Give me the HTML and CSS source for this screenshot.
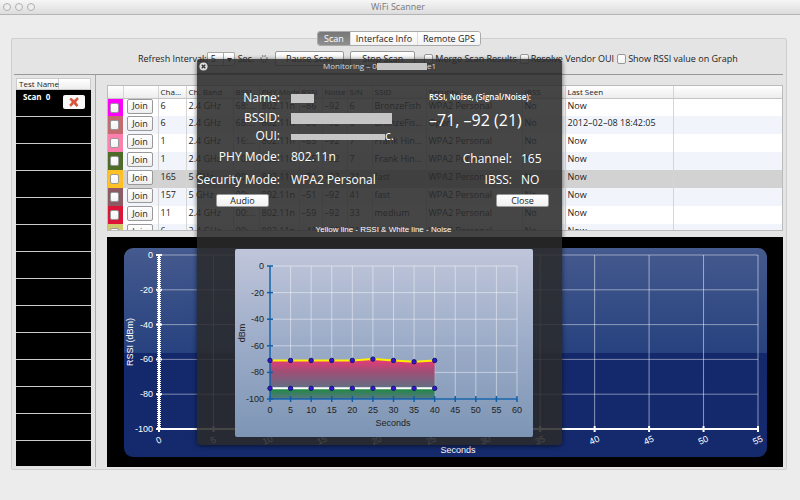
FILE: index.html
```html
<!DOCTYPE html>
<html lang="en">
  <head>
    <meta charset="UTF-8" />
    <meta name="viewport" content="width=device-width, initial-scale=1.0" />
    <title>WiFi Scanner</title>
    <link rel="stylesheet" href="styles.css">
  </head>
  <body>
    <header class="titlebar">
      <div class="lights"><i></i><i></i><i></i></div>
      <h1>WiFi Scanner</h1>
    </header>

    <main class="window">
      <nav class="tabs">
        <button class="active" type="button">Scan</button>
        <button type="button">Interface Info</button>
        <button type="button">Remote GPS</button>
      </nav>

      <section class="group">
        <div class="toolbar">
          <label class="interval">Refresh Interval:
            <select><option>5</option></select>
          </label>
          <span>Sec.</span>
          <svg class="spinner" viewBox="0 0 10 10"><circle cx="5" cy="5" r="3" fill="none" stroke="#777" stroke-width="2" stroke-dasharray="1 1.4" /></svg>
          <button class="btn wide" type="button">Pause Scan</button>
          <button class="btn wide last" type="button">Stop Scan</button>
          <label class="check"><input type="checkbox" />Merge Scan Results</label>
          <label class="check"><input type="checkbox" />Resolve Vendor OUI</label>
          <label class="check"><input type="checkbox" />Show RSSI value on Graph</label>
        </div>

        <div class="content">
          <aside class="tests">
            <div class="testsHead"><span>Test Name</span></div>
            <div class="testRow">
              <p>Scan&nbsp; 0</p>
              <button class="delete" type="button" aria-label="Delete">
                <svg viewBox="0 0 10 10"><path d="M2 1 L5 3.4 L8.4 .6 L9.4 2 L6.8 5 L9 8.4 L7.4 9.4 L4.8 6.6 L2 9.4 L.6 8 L3.2 5 L.8 2.2 Z" fill="#e2543a" stroke="#b8351f" stroke-width=".5" /></svg>
              </button>
            </div>
            <div class="testRow"></div>
            <div class="testRow"></div>
            <div class="testRow"></div>
            <div class="testRow"></div>
            <div class="testRow"></div>
            <div class="testRow"></div>
            <div class="testRow"></div>
            <div class="testRow"></div>
            <div class="testRow"></div>
            <div class="testRow"></div>
            <div class="testRow"></div>
            <div class="testRow"></div>
            <div class="testRow"></div>
          </aside>

          <div class="results">
            <div class="tableBox">
              <table>
                <colgroup>
                  <col class="cColor" /><col class="cJoin" /><col class="cChan" /><col class="cBand" /><col class="cBssid" /><col class="cPhy" /><col class="cNum" /><col class="cNoise" /><col class="cNoise" /><col class="cSsid" /><col class="cSec" /><col class="cIbss" /><col class="cSeen" /><col />
                </colgroup>
                <thead>
                  <tr><th></th><th></th><th>Cha...</th><th>Ch. Band</th><th>BSSI...</th><th>PHY Mode</th><th>RSSI</th><th>Noise</th><th>S/N</th><th>SSID</th><th>Security</th><th>IBSS</th><th>Last Seen</th><th></th></tr>
                </thead>
                <tbody id="networks"></tbody>
              </table>
            </div>

            <div class="graph">
              <svg id="mainChart" viewBox="0 0 643 209">
                <defs>
                  <linearGradient id="sky" x1="0" y1="0" x2="0" y2="1">
                    <stop offset="0" stop-color="#455a8e" />
                    <stop offset=".5" stop-color="#27427f" />
                    <stop offset=".5" stop-color="#14296c" />
                    <stop offset="1" stop-color="#142a6d" />
                  </linearGradient>
                </defs>
                <rect width="643" height="209" rx="9" fill="url(#sky)" />
              </svg>
            </div>
          </div>
        </div>
      </section>
    </main>

    <section class="monitor">
      <div class="monitorHead">
        <button class="closeX" type="button" aria-label="Close window">
          <svg viewBox="0 0 10 10"><circle cx="5" cy="5" r="4.5" fill="#ddd" /><path d="M3 3 L7 7 M7 3 L3 7" stroke="#333" stroke-width="1.4" /></svg>
        </button>
        <h2>Monitoring – 0<span class="redact mac"></span>e1</h2>
      </div>
      <div class="details">
        <dl>
          <dt>Name:</dt><dd><span class="redact name"></span></dd>
          <dt>BSSID:</dt><dd><span class="redact bssid"></span></dd>
          <dt>OUI:</dt><dd class="oui"><span class="redact vendor"></span>c.</dd>
          <dt>PHY Mode:</dt><dd>802.11n</dd>
          <dt>Security Mode:</dt><dd>WPA2 Personal</dd>
        </dl>
        <div class="signal">
          <p class="signalLabel">RSSI, Noise, (Signal/Noise):</p>
          <p class="signalValue">–71, –92 (21)</p>
          <dl>
            <dt>Channel:</dt><dd>165</dd>
            <dt>IBSS:</dt><dd>NO</dd>
          </dl>
        </div>
      </div>
      <div class="actions">
        <button class="btn" type="button">Audio</button>
        <button class="btn" type="button">Close</button>
      </div>
      <p class="legend">Yellow line - RSSI &amp; White line - Noise</p>
      <div class="monitorGraph">
        <svg id="monitorChart" viewBox="0 0 298 188">
          <defs>
            <linearGradient id="pink" x1="0" y1="0" x2="0" y2="1">
              <stop offset="0" stop-color="#ec3a78" />
              <stop offset=".4" stop-color="#a34d75" />
              <stop offset="1" stop-color="#5f7084" />
            </linearGradient>
            <linearGradient id="green" x1="0" y1="0" x2="0" y2="1">
              <stop offset="0" stop-color="#1b8a3f" />
              <stop offset="1" stop-color="#5b7584" />
            </linearGradient>
          </defs>
        </svg>
      </div>
    </section>
    <script src="script.js"></script>
  </body>
</html>
```

FILE: styles.css
```css
* {
  box-sizing: border-box;
}
body {
  margin: 0;
  min-height: 100vh;
  position: relative;
  background: #ececec;
  color: #222;
  font: 9px/12px "Open Sans", "Noto Sans", sans-serif;
}
h1,
h2,
p,
dl,
dd {
  margin: 0;
}
button,
select,
input {
  font: inherit;
  color: inherit;
  margin: 0;
  padding: 0;
}
svg {
  display: block;
}

.titlebar {
  display: flex;
  align-items: center;
  height: 15px;
  background: linear-gradient(#f6f6f6, #dcdcdc);
  border-bottom: 1px solid #b5b5b5;
}
.titlebar h1 {
  flex: 1;
  padding-right: 40px;
  text-align: center;
  font-size: 9px;
  font-weight: normal;
  color: #777;
}
.lights {
  display: flex;
  gap: 4px;
  width: 36px;
  padding-left: 3px;
}
.lights i {
  width: 8px;
  height: 8px;
  border: 1px solid #b0b0b0;
  border-radius: 50%;
  background: #eee;
}

.window {
  padding: 16px 13px 30px 11px;
}
.tabs {
  position: relative;
  display: flex;
  width: max-content;
  height: 15px;
  margin: 0 auto -8px;
  border: 1px solid #aaa;
  border-radius: 3px;
  overflow: hidden;
}
.tabs button {
  padding: 0 5px;
  border: 0;
  border-right: 1px solid #ddd;
  background: linear-gradient(#fff, #f3f3f3);
}
.tabs button.active {
  padding: 0 6px;
  background: linear-gradient(#777, #8f8f8f);
  color: #fff;
}
.tabs button:last-child {
  border-right: 0;
}
.group {
  border: 1px solid #cfcfcf;
  border-radius: 2px;
  background: #e4e4e4;
  padding: 0 3px 2px 2px;
}

.toolbar {
  display: flex;
  align-items: center;
  height: 36px;
  padding: 4px 0 0 124px;
  border-bottom: 1px solid #999;
  white-space: nowrap;
}
.interval {
  display: flex;
  align-items: center;
  margin-right: 3px;
}
.interval select {
  appearance: none;
  width: 28px;
  height: 14px;
  padding-left: 3px;
  border: 1px solid #aaa;
  border-radius: 1px;
  background: #fff url("data:image/svg+xml,%3Csvg xmlns='http://www.w3.org/2000/svg' width='11' height='12'%3E%3Cpath d='M.5 0V12' stroke='%23aaa'/%3E%3Cpath d='M4 5h5l-2.500 4z' fill='%23333'/%3E%3C/svg%3E") right center no-repeat;
}
.spinner {
  width: 10px;
  height: 10px;
  margin: 0 6px 0 5px;
}
.btn {
  height: 13px;
  border: 1px solid #999;
  border-radius: 2px;
  background: linear-gradient(#fff, #f0f0f0);
  line-height: 11px;
}
.btn.wide {
  width: 69px;
  height: 15px;
  margin-right: 6px;
}
.btn.wide.last {
  width: 65px;
  margin-right: 9px;
}
.check {
  display: flex;
  align-items: center;
  gap: 2px;
  margin-right: 3px;
}
input[type="checkbox"] {
  appearance: none;
  width: 9px;
  height: 10px;
  border: 1px solid #999;
  border-radius: 2px;
  background: linear-gradient(#fff, #f2f2f2);
}

.content {
  display: flex;
}
.tests {
  width: 82px;
  padding: 3px 4px 0 2px;
  border-right: 1px solid #aaa;
}
.testsHead {
  height: 12px;
  border: 1px solid #ccc;
  background: linear-gradient(#fff, #eee);
  font-size: 8px;
  line-height: 10px;
}
.testsHead span {
  display: block;
  width: 42px;
  padding-left: 2px;
  border-right: 1px solid #ccc;
  white-space: nowrap;
}
.testRow {
  display: flex;
  justify-content: space-between;
  height: 27px;
  padding: 1px 6px 0 7px;
  background: #000;
  border-bottom: 1px solid #ccc;
  color: #fff;
  font-weight: bold;
  font-size: 8px;
}
.testRow:last-child {
  height: 25px;
  border-bottom: 0;
}
.delete {
  width: 22px;
  height: 14px;
  margin-top: 4px;
  border: 0;
  border-radius: 2px;
  background: #f8f8f8;
}
.delete svg {
  width: 10px;
  height: 10px;
  margin: 0 auto;
}

.results {
  flex: 1;
  min-width: 0;
  padding-left: 11px;
}
.tableBox {
  height: 146px;
  margin: 10px 0 6px;
  border: 1px solid #bbb;
  background: #fff;
  overflow: hidden;
}
table {
  width: 100%;
  table-layout: fixed;
  border-collapse: collapse;
}
th,
td {
  padding: 0 0 0 2px;
  border-right: 1px solid #d5d5d5;
  text-align: left;
  font-weight: normal;
  white-space: nowrap;
  overflow: hidden;
}
th:last-child,
td:last-child {
  border-right: 0;
}
th {
  height: 12px;
  background: linear-gradient(#fff, #ececec);
  border-bottom: 1px solid #c4c4c4;
  font-size: 8px;
  line-height: 10px;
}
td {
  height: 18px;
  vertical-align: top;
  line-height: 13px;
}
tbody tr:nth-child(even) {
  background: #f1f5fb;
}
tbody tr.selected {
  background: #d2d2d2;
}
.cColor { width: 15px; }
.cJoin { width: 35px; }
.cChan { width: 28px; }
.cBand { width: 47px; }
.cBssid { width: 26px; }
.cPhy { width: 40px; }
.cNum { width: 23px; }
.cNoise { width: 25px; }
.cSsid { width: 54px; }
.cSec { width: 96px; }
.cIbss { width: 43px; }
.cSeen { width: 108px; }
td.swatch {
  padding: 4px 0 0 2px;
  border-right: 0;
}
td.swatch input {
  display: block;
}
.join {
  display: block;
  width: 26px;
  height: 15px;
  margin: 0 0 0 2px;
  border: 1px solid #999;
  border-radius: 2px;
  background: linear-gradient(#fff, #eee);
  line-height: 12px;
}

.graph {
  padding: 11px 16px 10px 17px;
  background: #000;
}
.graph svg,
.monitorGraph svg {
  width: 100%;
  font-family: "Liberation Sans", sans-serif;
}

/* floating panel */
.monitor {
  position: absolute;
  top: 59px;
  left: 197px;
  width: 365px;
  border-radius: 4px;
  background: rgba(42, 42, 42, 0.87);
  box-shadow: 0 1px 5px rgba(0, 0, 0, 0.6);
  color: #fff;
  padding-bottom: 8px;
}
.monitorHead {
  display: flex;
  align-items: center;
  height: 15px;
  padding-left: 2px;
  border-bottom: 1px solid #333;
}
.closeX {
  width: 9px;
  height: 9px;
  border: 0;
  background: none;
}
.monitorHead h2 {
  flex: 1;
  padding-right: 11px;
  text-align: center;
  font-size: 8px;
  font-weight: normal;
  color: #ddd;
}
.redact {
  display: inline-block;
  background: #c6c6c6;
  vertical-align: middle;
}
.mac {
  width: 50px;
  height: 7px;
}
.name {
  width: 23px;
  height: 9px;
}
.bssid {
  width: 101px;
  height: 11px;
}
.vendor {
  width: 94px;
  height: 6px;
}
.details {
  display: flex;
  justify-content: space-between;
  height: 116px;
  padding: 13px 17px 0 0;
  font-size: 12px;
  font-weight: 500;
  white-space: nowrap;
}
.details dl {
  display: grid;
  grid-template: 21px 20px 16px 26px 19px / 83px auto;
  column-gap: 11px;
  align-items: center;
  line-height: 16px;
}
.details dt {
  display: flex;
  justify-content: flex-end;
}
.details .signal {
  width: 116px;
}
.signal .signalLabel {
  font-size: 8px;
  font-weight: 600;
  line-height: 20px;
}
.signal .signalValue {
  font-size: 16px;
  line-height: 26px;
}
.signal dl {
  grid-template: 21px 21px / 83px auto;
  column-gap: 9px;
  margin-top: 15px;
}
.actions {
  display: flex;
  justify-content: space-between;
  padding: 4px 13px 0 19px;
}
.actions .btn {
  width: 53px;
  color: #222;
}
.legend {
  padding: 17px 0 0 8px;
  text-align: center;
  font-size: 8px;
  line-height: 12px;
  font-family: "Liberation Sans", sans-serif;
}
.monitorGraph {
  margin: 13px 29px 0 38px;
  border-radius: 2px;
  background: linear-gradient(#c0c6da, #9cacc8 50%, #7d95b5);
}
```

FILE: script.js
```js
const networks = [
  ["#ff00ff", "6", "2.4 GHz", "68:...", "802.11n", "-86", "-92", "6", "BronzeFish", "WPA2 Personal", "No", "Now"],
  ["#c46a6e", "6", "2.4 GHz", "68:...", "802.11n", "-86", "-92", "6", "BronzeFis...", "Open", "No", "2012-02-08 18:42:05"],
  ["#ff7fae", "1", "2.4 GHz", "16:...", "802.11n", "-85", "-92", "7", "Frank Hin...", "WPA2 Personal", "No", "Now"],
  ["#4e6b2a", "1", "2.4 GHz", "10:...", "802.11n", "-85", "-92", "7", "Frank Hin...", "WPA2 Personal", "No", "Now"],
  ["#ffc125", "165", "5 GHz", "00:...", "802.11n", "-71", "-92", "21", "fast", "WPA2 Personal", "No", "Now"],
  ["#8b5a65", "157", "5 GHz", "00:...", "802.11n", "-51", "-92", "41", "fast", "WPA2 Personal", "No", "Now"],
  ["#dc1438", "11", "2.4 GHz", "00:...", "802.11n", "-59", "-92", "33", "medium", "WPA2 Personal", "No", "Now"],
  ["#cfc96f", "6", "2.4 GHz", "00:...", "802.11n", "-41", "-92", "51", "medium", "WPA2 Personal", "No", "Now"],
];

document.getElementById("networks").innerHTML = networks
  .map(([color, ...cells]) => {
    const tds = cells.map((c) => `<td>${c.replace(/-/g, "–")}</td>`).join("");
    return `<tr class="${cells[0] == "165" ? "selected" : ""}">
      <td class="swatch" style="background:${color}"><input type="checkbox" aria-label="Show on graph" /></td>
      <td><button class="join" type="button">Join</button></td>${tds}<td></td></tr>`;
  })
  .join("");

const line = (x1, y1, x2, y2, color, w) =>
  `<path d="M${x1} ${y1} L${x2} ${y2}" stroke="${color}" stroke-width="${w}" />`;
const text = (x, y, str, color, size, anchor, rotate) =>
  `<text x="${x}" y="${y}" fill="${color}" font-size="${size}" text-anchor="${anchor}" ${
    rotate ? `transform="rotate(${rotate} ${x} ${y})"` : ""
  }>${str}</text>`;

// big graph
const drawMain = () => {
  const left = 35, right = 634, top = 7, bottom = 181;
  let s = "";
  for (let i = 0; i <= 5; i++) {
    const y = top + ((bottom - top) * i) / 5;
    s += line(left, y, right, y, "rgba(255,255,255,.45)", 1);
    s += text(left - 6, y + 3, i * -20, "#fff", 9, "end");
    s += line(left - 3, y, left + 3, y, "#fff", 2);
  }
  for (let i = 0; i <= 11; i++) {
    const x = left + ((right - left) * i) / 11;
    s += line(x, top, x, bottom, "rgba(255,255,255,.5)", 1);
    s += line(x, bottom - 3, x, bottom + 3, "#fff", 2);
    s += text(x + 1, bottom + 14, i * 5, "#fff", 9, "middle", -25);
  }
  s += line(left, top, left, bottom, "#fff", 2);
  s += `<path d="M${left} ${top} V${bottom}" stroke="#fff" stroke-width="4" stroke-dasharray="1 1" />`;
  s += line(left, bottom, right, bottom, "#fff", 2);
  s += text(334, 205, "Seconds", "#fff", 9, "middle");
  s += text(9, 94, "RSSI (dBm)", "#fff", 9, "middle", -90);
  document.getElementById("mainChart").innerHTML += s;
};

// graph in the monitoring panel
const drawMonitor = () => {
  const left = 35, right = 282, top = 17, bottom = 150;
  const rssi = [-71, -71, -71, -71, -71, -70, -71, -72, -71];
  const px = (i) => left + ((right - left) * i) / 12;
  const py = (v) => top + ((bottom - top) * -v) / 100;
  let s = "";
  for (let i = 0; i <= 5; i++) {
    s += line(left, py(i * -20), right, py(i * -20), "rgba(255,255,255,.45)", 1);
  }
  for (let i = 0; i <= 12; i++) {
    s += line(px(i), top, px(i), bottom, "rgba(255,255,255,.45)", 1);
  }
  const points = rssi.map((v, i) => `${px(i)},${py(v)}`).join(" ");
  s += `<polygon points="${points} ${px(8)},${py(-92)} ${left},${py(-92)}" fill="url(#pink)" />`;
  s += `<rect x="${left}" y="${py(-92)}" width="${px(8) - left}" height="${bottom - py(-92)}" fill="url(#green)" />`;
  s += `<polyline points="${points}" fill="none" stroke="#ffee00" stroke-width="2" />`;
  s += `<path d="M${left} ${py(-92)} H${px(8)}" stroke="#fff" stroke-width="2" />`;
  s += line(left, top, left, bottom, "#0f5fa8", 1.5);
  s += line(left, bottom, right, bottom, "#0f5fa8", 1.5);
  rssi.forEach((v, i) => {
    s += `<circle cx="${px(i)}" cy="${py(v)}" r="2.2" fill="#3a10e0" stroke="#111a66" />`;
    s += `<circle cx="${px(i)}" cy="${py(-92)}" r="2.2" fill="#3a10e0" stroke="#111a66" />`;
  });
  for (let i = 0; i <= 5; i++) {
    s += line(left - 3, py(i * -20), left + 3, py(i * -20), "#0f5fa8", 1.5);
    s += text(left - 6, py(i * -20) + 3, i * -20, "#222", 9, "end");
  }
  for (let i = 0; i <= 12; i++) {
    s += line(px(i), bottom - 3, px(i), bottom + 3, "#0f5fa8", 1.5);
    s += text(px(i), bottom + 14, i * 5, "#222", 9, "middle");
  }
  s += text(158, 177, "Seconds", "#222", 9, "middle");
  s += text(10, 84, "dBm", "#222", 9, "middle", -90);
  document.getElementById("monitorChart").innerHTML += s;
};

drawMain();
drawMonitor();
```
